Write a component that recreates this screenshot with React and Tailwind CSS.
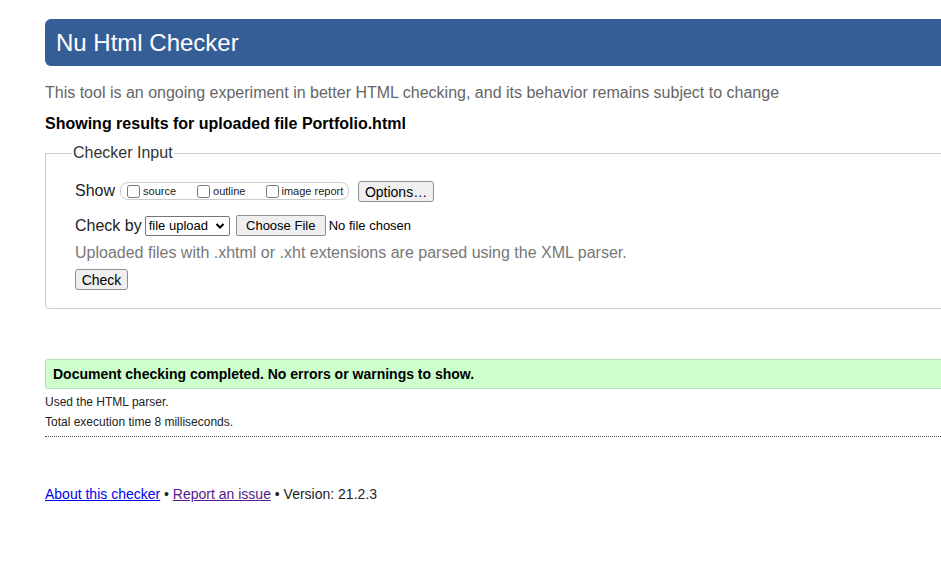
import React from 'react';

export default function App() {
  return (
    <div className="w-[941px] h-[588px] overflow-hidden bg-white font-['Liberation_Sans',Arial,sans-serif] text-[#222]">
      <div className="w-[1100px] ml-[45px] pt-[19px]">
        {/* Header */}
        <h1 className="h-[47px] flex items-center pl-[11px] bg-[#365e96] text-white text-[24px] rounded-l-[6px]">
          Nu Html Checker
        </h1>

        <p className="mt-[16px] text-[16px] leading-[22px] text-[#666]">
          This tool is an ongoing experiment in better HTML checking, and its behavior remains subject to change
        </p>
        <p className="mt-[10px] text-[16px] leading-[20px] font-bold text-black">
          Showing results for uploaded file Portfolio.html
        </p>

        {/* Checker Input */}
        <fieldset className="mt-[10px] border border-[#ccc] rounded-bl-[4px] pl-[29px] pb-[17px] h-[165px]">
          <legend className="ml-[-3px] px-[1px] text-[16px] leading-[18px] text-[#333]">Checker Input</legend>

          <div className="mt-[18px] flex items-center h-[22px]">
            <span className="text-[16px] text-[#222]">Show</span>
            <span className="ml-[5px] h-[18px] w-[229px] flex items-center border border-[#ccc] rounded-[8px] pl-[6px] text-[11px] text-[#222]">
              <label className="flex items-center">
                <input type="checkbox" className="m-0 w-[13px] h-[13px]" />
                <span className="ml-[3px]">source</span>
              </label>
              <label className="flex items-center ml-[21px]">
                <input type="checkbox" className="m-0 w-[13px] h-[13px]" />
                <span className="ml-[3px]">outline</span>
              </label>
              <label className="flex items-center ml-[21px]">
                <input type="checkbox" className="m-0 w-[13px] h-[13px]" />
                <span className="ml-[2px]">image report</span>
              </label>
            </span>
            <button className="ml-[9px] h-[21px] w-[76px] bg-[#efefef] border border-[#8f8f8f] rounded-[3px] text-[14px] text-black">
              Options…
            </button>
          </div>

          <div className="mt-[13px] flex items-center h-[21px]">
            <span className="text-[16px] text-[#222]">Check by</span>
            <span className="ml-[3px] h-[20px] w-[85px] flex items-center justify-between border border-[#767676] rounded-[2px] pl-[3px] pr-[4px] text-[13px] text-black">
              file upload
              <svg width="10" height="8" viewBox="0 0 10 8" className="mt-[1px]">
                <path d="M1.5 2 L5 5.5 L8.5 2" fill="none" stroke="#000" strokeWidth="2" />
              </svg>
            </span>
            <button className="ml-[6px] h-[21px] w-[90px] bg-[#efefef] border border-[#8f8f8f] rounded-[2px] text-[13px] text-black">
              Choose File
            </button>
            <span className="ml-[3px] text-[13px] text-black">No file chosen</span>
          </div>

          <p className="mt-[7px] text-[16px] leading-[20px] text-[#777]">
            Uploaded files with .xhtml or .xht extensions are parsed using the XML parser.
          </p>

          <button className="mt-[6px] h-[21px] w-[53px] bg-[#efefef] border border-[#8f8f8f] rounded-[3px] text-[14px] text-black">
            Check
          </button>
        </fieldset>

        {/* Result */}
        <div className="mt-[50px] h-[30px] flex items-center pl-[7px] bg-[#ccffcc] border border-[#bbd9bb] rounded-l-[3px] text-[14px] font-bold text-black">
          Document checking completed. No errors or warnings to show.
        </div>
        <p className="mt-[6px] text-[12px] leading-[14px] text-[#222]">Used the HTML parser.</p>
        <p className="mt-[6px] text-[12px] leading-[14px] text-[#222]">Total execution time 8 milliseconds.</p>
        <div className="mt-[7px] border-b border-dotted border-[#555]"></div>

        {/* Footer */}
        <p className="mt-[47px] text-[14px] text-[#222]">
          <a href="#" className="text-[#0000ee] underline">About this checker</a>
          {' • '}
          <a href="#" className="text-[#551a8b] underline">Report an issue</a>
          {' • Version: 21.2.3'}
        </p>
      </div>
    </div>
  );
}
